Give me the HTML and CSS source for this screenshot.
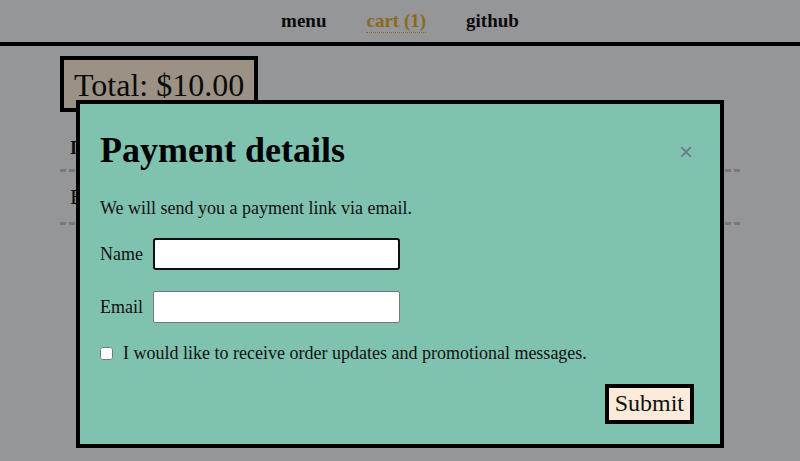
FILE: index.html
```html
<!DOCTYPE html>
<html lang="en">
<head>
<meta charset="utf-8">
<title>Cart</title>
<link rel="stylesheet" href="styles.css">
</head>
<body>
<header class="site-header">
  <nav class="nav">
    <a class="nav-link" href="#">menu</a>
    <a class="nav-link nav-link-active" href="#">cart (1)</a>
    <a class="nav-link" href="#">github</a>
  </nav>
</header>
<main class="page">
  <div class="total">Total: $10.00</div>
  <div class="cart-row cart-head">Item</div>
  <div class="cart-row cart-item">Espresso</div>
</main>

<div class="overlay">
  <div class="modal" role="dialog">
    <div class="modal-head">
      <h2 class="modal-title">Payment details</h2>
      <button class="modal-close" type="button">×</button>
    </div>
    <p class="modal-text">We will send you a payment link via email.</p>
    <form class="form">
      <div class="field">
        <label class="field-label" for="name">Name</label>
        <input class="field-input field-input-focus" id="name" type="text">
      </div>
      <div class="field">
        <label class="field-label" for="email">Email</label>
        <input class="field-input" id="email" type="email">
      </div>
      <div class="check">
        <input class="check-box" id="promo" type="checkbox">
        <label class="check-label" for="promo">I would like to receive order updates and promotional messages.</label>
      </div>
      <div class="actions">
        <button class="submit" type="button">Submit</button>
      </div>
    </form>
  </div>
</div>
</body>
</html>
```

FILE: styles.css
```css
html, body {
  margin: 0;
  padding: 0;
}
body {
  background: #eff2f4;
  font-family: "Liberation Serif", "Times New Roman", serif;
  color: #111;
  width: 800px;
  height: 461px;
  overflow: hidden;
}
.site-header {
  border-bottom: 4px solid #000;
  height: 42px;
  display: flex;
  align-items: center;
  justify-content: center;
}
.nav {
  display: flex;
  gap: 40px;
}
.nav-link {
  font-weight: bold;
  font-size: 19px;
  color: #111;
  text-decoration: none;
}
.nav-link-active {
  color: #e3aa31;
  border-bottom: 1px dotted #e3aa31;
}
.page {
  width: 680px;
  margin: 10px auto 0;
}
.total {
  display: inline-block;
  background: #faebd7;
  border: 4px solid #000;
  font-size: 32px;
  padding: 7px 10px 4px;
}
.cart-row {
  border-bottom: 3px dashed #c4c4c4;
  padding: 12px 10px;
  font-size: 22px;
}
.cart-head {
  font-weight: bold;
  font-size: 18px;
  padding-top: 26px;
  padding-bottom: 10px;
}
.overlay {
  position: fixed;
  inset: 0;
  background: rgba(0, 0, 0, 0.38);
  display: flex;
  justify-content: center;
  align-items: flex-start;
  padding-top: 100px;
}
.modal {
  width: 600px;
  background: #80c2b0;
  border: 4px solid #000;
  padding: 16px 20px 20px;
}
.modal-head {
  display: flex;
  justify-content: space-between;
  align-items: flex-start;
}
.modal-title {
  margin: 9px 0 0;
  font-size: 36px;
  font-weight: bold;
  color: #000;
}
.modal-close {
  background: none;
  border: 0;
  padding: 0;
  margin: 19px 7px 0 0;
  font-family: "Liberation Sans", Arial, sans-serif;
  font-size: 24px;
  line-height: 26px;
  color: #6d7b86;
  cursor: pointer;
}
.modal-text {
  font-size: 18px;
  margin: 27px 0 19px;
}
.form {
  display: flex;
  flex-direction: column;
  gap: 21px;
}
.field {
  display: flex;
  align-items: center;
  gap: 10px;
}
.field-label {
  font-size: 18px;
}
.field-input {
  width: 247px;
  height: 32px;
  box-sizing: border-box;
  border: 1px solid #767676;
  border-radius: 2px;
  background: #fff;
  font-size: 16px;
  margin: 0;
}
.field-input-focus {
  outline: 2px solid #101010;
  outline-offset: -2px;
  border-radius: 3px;
}
.check {
  display: flex;
  align-items: center;
  gap: 10px;
  margin-top: -1px;
}
.check-box {
  margin: 0;
  width: 13px;
  height: 13px;
}
.check-label {
  font-size: 18px;
}
.actions {
  display: flex;
  justify-content: flex-end;
  margin-top: -1px;
  padding-right: 6px;
}
.submit {
  font-family: "Liberation Serif", "Times New Roman", serif;
  font-size: 24px;
  background: #fcebd9;
  border: 4px solid #000;
  padding: 2px 6px 3px;
  color: #111;
}
```
